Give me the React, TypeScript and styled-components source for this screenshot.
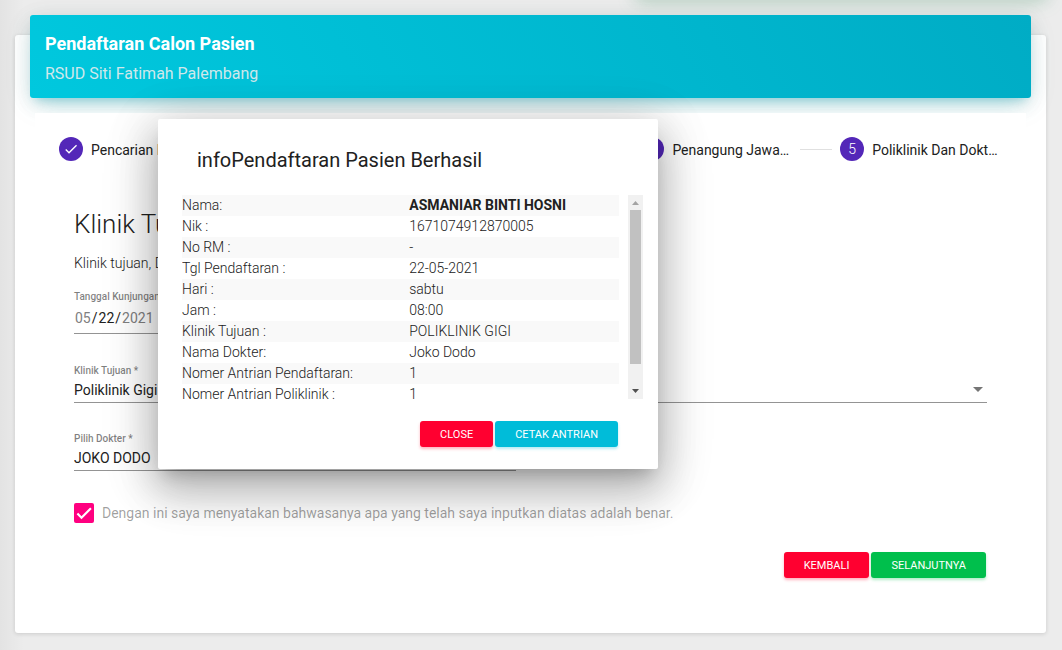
import React from "react";
import styled, { createGlobalStyle } from "styled-components";

const GlobalStyle = createGlobalStyle`
  * { box-sizing: border-box; }
  body {
    margin: 0;
    background: #ececec;
    color: #212121;
    font-family: Roboto, "Liberation Sans", sans-serif;
    font-size: 14px;
    font-weight: 300;
    line-height: 21px;
    overflow: hidden;
  }
  button, input, select { font-family: inherit; }
`;

const Page = styled.main`
  position: relative;
  min-height: 100vh;
  padding: 35px 16px 17px 15px;
  overflow: hidden;
`;

const SidebarShade = styled.div`
  position: absolute;
  top: 0;
  bottom: 0;
  left: 0;
  width: 24px;
  background: linear-gradient(90deg, rgba(0, 0, 0, 0.04), rgba(0, 0, 0, 0));
`;

const NoticeShade = styled.div`
  position: absolute;
  top: -20px;
  left: 636px;
  right: 16px;
  height: 12px;
  box-shadow: 0 4px 20px 0 rgba(0, 0, 0, 0.1), 0 8px 18px 0 rgba(76, 175, 120, 0.4);
`;

const Card = styled.section`
  position: relative;
  padding: 0 15px 55px;
  border-radius: 3px;
  background: #fff;
  box-shadow: 0 1px 4px 0 rgba(0, 0, 0, 0.14);
`;

const CardHeader = styled.header`
  position: relative;
  top: -20px;
  margin-bottom: -5px;
  padding: 15px 15px 12px;
  border-radius: 3px;
  color: #fff;
  background: linear-gradient(60deg, #00c8de, #00acc5);
  box-shadow: 0 12px 20px -10px rgba(0, 172, 193, 0.28), 0 4px 20px 0 rgba(0, 40, 40, 0.12),
    0 7px 8px -5px rgba(0, 172, 193, 0.2), 0 8px 30px 0 rgba(0, 150, 150, 0.08);
`;

const CardTitle = styled.h4`
  margin: 0 0 4px;
  font-size: 18px;
  font-weight: 700;
  line-height: 28px;
`;

const CardSubtitle = styled.p`
  margin: 0;
  font-size: 16px;
  font-weight: 400;
  line-height: 24px;
  color: rgba(238, 238, 238, 0.88);
`;

const Stepper = styled.div`
  position: relative;
  margin: 0 5px;
  background: #fff;
`;

const StepList = styled.ol`
  display: grid;
  grid-template-columns: 97fr 97fr 97fr 100fr 81fr;
  align-items: center;
  height: 72px;
  margin: 0;
  padding: 0 24px;
  list-style: none;
`;

const Step = styled.li`
  display: flex;
  align-items: center;
  min-width: 0;
  gap: 8px;
`;

const StepIcon = styled.span`
  display: flex;
  flex: none;
  align-items: center;
  justify-content: center;
  width: 24px;
  height: 24px;
  border-radius: 50%;
  background: #5327b8;
  color: #fff;
`;

const StepLabel = styled.span`
  flex: 1;
  padding-top: 2px;
  overflow: hidden;
  font-weight: 400;
  white-space: nowrap;
  text-overflow: ellipsis;
`;

const Connector = styled.span`
  flex: none;
  width: 32px;
  margin-right: 8px;
  border-top: 1px solid rgba(0, 0, 0, 0.12);
`;

const Form = styled.form`
  padding: 21px 39px 0;
`;

const FormTitle = styled.h3`
  margin: 0 0 11px;
  font-size: 26px;
  font-weight: 300;
  line-height: 36px;
`;

const FormIntro = styled.p`
  margin: 0 0 15px;
`;

const Field = styled.div<{ $half?: boolean }>`
  display: flex;
  flex-direction: column;
  width: ${(p) => (p.$half ? "calc(50% - 15px)" : "100%")};
  margin-bottom: 28px;
`;

const FieldLabel = styled.label`
  font-size: 10px;
  font-weight: 500;
  line-height: 15px;
  color: rgba(0, 0, 0, 0.5);
`;

const DateInput = styled.input`
  height: 30px;
  margin: 0 0 1px;
  padding: 0 0 2px;
  border: 0;
  border-bottom: 1px solid #949494;
  background: none;
  font-size: 14px;
  color: #212121;
`;

const SelectBox = styled.div`
  display: grid;
  align-items: center;
  border-bottom: 1px solid #949494;
  > * { grid-area: 1 / 1; }
  > svg { justify-self: end; margin: 0 4px 2px 0; pointer-events: none; }
`;

const Select = styled.select`
  height: 24px;
  padding: 0;
  border: 0;
  appearance: none;
  background: none;
  font-size: 14px;
  color: #212121;
`;

const Agreement = styled.label`
  display: flex;
  align-items: center;
  gap: 8px;
  height: 20px;
  margin: 32px 0 29px;
  font-weight: 400;
  color: rgba(0, 0, 0, 0.38);
`;

const CheckWrap = styled.span`
  display: grid;
  > * { grid-area: 1 / 1; }
  > svg { position: relative; pointer-events: none; }
`;

const CheckInput = styled.input`
  width: 20px;
  height: 20px;
  margin: 0;
  border-radius: 2px;
  appearance: none;
  background: #ff0080;
`;

const Actions = styled.div`
  display: flex;
  justify-content: flex-end;
  gap: 2px;
  padding-right: 1px;
`;

const tones = {
  danger: { fill: "#ff0030", shade: "rgba(255, 0, 48, 0.3)" },
  success: { fill: "#00bf4c", shade: "rgba(0, 191, 76, 0.3)" },
  info: { fill: "#00bcd9", shade: "rgba(0, 188, 217, 0.3)" },
};

const Button = styled.button<{ $tone: keyof typeof tones }>`
  height: 26px;
  padding: 2px 20px 0;
  border: 0;
  border-radius: 3px;
  background: ${(p) => tones[p.$tone].fill};
  box-shadow: 0 2px 3px 0 ${(p) => tones[p.$tone].shade};
  color: #fff;
  font-size: 11px;
  font-weight: 400;
  line-height: 16px;
  text-transform: uppercase;
`;

const Dialog = styled.div`
  position: absolute;
  top: 119px;
  left: 158px;
  width: 500px;
  padding: 25px 15px 22px 24px;
  border-radius: 2px;
  background: #fff;
  box-shadow: 0 11px 15px -7px rgba(0, 0, 0, 0.2), 0 24px 38px 3px rgba(0, 0, 0, 0.14),
    0 9px 46px 8px rgba(0, 0, 0, 0.12), 0 12px 60px 4px rgba(0, 0, 0, 0.1);
`;

const DialogTitle = styled.h2`
  margin: 0 15px 19px;
  font-size: 20px;
  font-weight: 400;
  line-height: 32px;
`;

const DialogBody = styled.div`
  display: flex;
  gap: 9px;
  height: 204px;
`;

const ScrollArea = styled.div`
  flex: 1;
  overflow-y: auto;
  scrollbar-width: none;
`;

const ScrollTrack = styled.div`
  display: grid;
  grid-template-rows: 15px 154fr 20fr 15px;
  justify-items: center;
  align-items: center;
  width: 15px;
  background: #f1f1f1;
`;

const ScrollThumb = styled.div`
  grid-row: 2;
  width: 11px;
  height: 100%;
  background: #c1c1c1;
`;

const InfoTable = styled.table`
  width: 100%;
  border-collapse: collapse;
  table-layout: fixed;
`;

const InfoRow = styled.tr`
  &:nth-child(odd) { background: #f9f9f9; }
`;

const InfoName = styled.th`
  width: 52%;
  padding: 0;
  font-weight: 300;
  text-align: left;
`;

const InfoValue = styled.td`
  padding: 0;
  b { font-weight: 700; }
`;

const DialogActions = styled(Actions)`
  margin-top: 22px;
  padding-right: 25px;
`;

const steps = ["Pencarian Pasien", "Data Diri Pasien", "Alamat Pasien", "Penangung Jawab Pasien", "Poliklinik Dan Dokter Tujuan"];

const info: [string, React.ReactNode][] = [
  ["Nama:", <b>ASMANIAR BINTI HOSNI</b>],
  ["Nik :", "1671074912870005"],
  ["No RM :", "-"],
  ["Tgl Pendaftaran :", "22-05-2021"],
  ["Hari :", "sabtu"],
  ["Jam :", "08:00"],
  ["Klinik Tujuan :", "POLIKLINIK GIGI"],
  ["Nama Dokter:", "Joko Dodo"],
  ["Nomer Antrian Pendaftaran:", "1"],
  ["Nomer Antrian Poliklinik :", "1"],
];

const StepCheck = () => (
  <svg width="16" height="16" viewBox="0 0 24 24" fill="#fff" aria-hidden="true">
    <path d="M9 16.2L4.8 12l-1.4 1.4L9 19 21 7l-1.4-1.4L9 16.2z" />
  </svg>
);

const Caret = () => (
  <svg width="10" height="5" viewBox="0 0 10 5" fill="#757575" aria-hidden="true">
    <path d="M0 0h10L5 5z" />
  </svg>
);

const ScrollArrow = styled.svg<{ $end?: boolean }>`
  grid-row: ${(p) => (p.$end ? 4 : 1)};
  fill: ${(p) => (p.$end ? "#505050" : "#a3a3a3")};
`;

export default function App() {
  return (
    <Page>
      <GlobalStyle />
      <SidebarShade />
      <NoticeShade />
      <Card>
        <CardHeader>
          <CardTitle>Pendaftaran Calon Pasien</CardTitle>
          <CardSubtitle>RSUD Siti Fatimah Palembang</CardSubtitle>
        </CardHeader>
        <Stepper>
          <StepList>
            {steps.map((label, i) => (
              <Step key={label}>
                <StepIcon>{i < steps.length - 1 ? <StepCheck /> : i + 1}</StepIcon>
                <StepLabel>{label}</StepLabel>
                {i < steps.length - 1 && <Connector />}
              </Step>
            ))}
          </StepList>
          <Form onSubmit={(e) => e.preventDefault()}>
            <FormTitle>Klinik Tujuan</FormTitle>
            <FormIntro>Klinik tujuan, Dokter</FormIntro>
            <Field $half>
              <FieldLabel htmlFor="tanggal">Tanggal Kunjungan</FieldLabel>
              <DateInput id="tanggal" type="date" min="2021-05-22" max="2021-05-28" defaultValue="2021-05-22" />
            </Field>
            <Field>
              <FieldLabel htmlFor="klinik">Klinik Tujuan *</FieldLabel>
              <SelectBox>
                <Select id="klinik"><option>Poliklinik Gigi</option></Select>
                <Caret />
              </SelectBox>
            </Field>
            <Field $half>
              <FieldLabel htmlFor="dokter">Pilih Dokter *</FieldLabel>
              <SelectBox>
                <Select id="dokter"><option>JOKO DODO</option></Select>
                <Caret />
              </SelectBox>
            </Field>
            <Agreement>
              <CheckWrap>
                <CheckInput type="checkbox" defaultChecked />
                <svg width="20" height="20" viewBox="0 0 24 24" fill="none" stroke="#fff" strokeWidth="2.6" aria-hidden="true">
                  <path d="M4.1 12.7L9 17.6 20.3 6.3" />
                </svg>
              </CheckWrap>
              Dengan ini saya menyatakan bahwasanya apa yang telah saya inputkan diatas adalah benar.
            </Agreement>
            <Actions>
              <Button type="button" $tone="danger">Kembali</Button>
              <Button type="submit" $tone="success">Selanjutnya</Button>
            </Actions>
          </Form>
        </Stepper>
      </Card>
      <Dialog role="dialog" aria-labelledby="dialog-title">
        <DialogTitle id="dialog-title">infoPendaftaran Pasien Berhasil</DialogTitle>
        <DialogBody>
          <ScrollArea>
            <InfoTable>
              <tbody>
                {info.map(([name, value]) => (
                  <InfoRow key={name}>
                    <InfoName scope="row">{name}</InfoName>
                    <InfoValue>{value}</InfoValue>
                  </InfoRow>
                ))}
              </tbody>
            </InfoTable>
          </ScrollArea>
          <ScrollTrack aria-hidden="true">
            <ScrollArrow width="15" height="15" viewBox="0 0 15 15">
              <path d="M4 10h7L7.5 6z" />
            </ScrollArrow>
            <ScrollThumb />
            <ScrollArrow $end width="15" height="15" viewBox="0 0 15 15">
              <path d="M4 5h7L7.5 9z" />
            </ScrollArrow>
          </ScrollTrack>
        </DialogBody>
        <DialogActions>
          <Button type="button" $tone="danger">Close</Button>
          <Button type="button" $tone="info">Cetak Antrian</Button>
        </DialogActions>
      </Dialog>
    </Page>
  );
}
